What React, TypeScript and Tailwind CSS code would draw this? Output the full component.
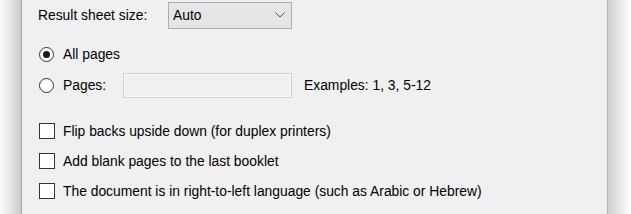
import React from "react";

function Radio({ checked }: { checked?: boolean }) {
  return (
    <span className="flex h-[15px] w-[15px] items-center justify-center rounded-full border border-[#333333] bg-white">
      {checked && <span className="h-[7px] w-[7px] rounded-full bg-[#1a1a1a]" />}
    </span>
  );
}

function Checkbox() {
  return <span className="block h-[16px] w-[16px] border border-[#333333] bg-white" />;
}

function CheckRow({ label, className }: { label: string; className: string }) {
  return (
    <div className={`flex h-[24px] items-center ${className}`}>
      <div className="w-[25px] pl-[1px]">
        <Checkbox />
      </div>
      <span>{label}</span>
    </div>
  );
}

export default function App() {
  return (
    <div
      className="flex h-[214px] w-[631px] overflow-hidden bg-white text-[13.85px] text-black"
      style={{ fontFamily: '"Liberation Sans", Arial, sans-serif' }}
    >
      {/* window shadow, left */}
      <div className="w-[22px] border-r border-[#a9a9a9] bg-gradient-to-r from-[#fafafa] via-[#e6e6e6] to-[#c9c9c9]" />

      {/* dialog body */}
      <div className="flex-1 bg-[#f0f0f0] pl-[16px]">
        <div className="mt-[2px] flex h-[27px] items-center">
          <span className="w-[130px]">Result sheet size:</span>
          <div className="flex h-[27px] w-[124px] items-center justify-between border border-[#adadad] bg-[#e5e5e5] pl-[4px] pr-[6px]">
            <span>Auto</span>
            <svg width="10" height="6" viewBox="0 0 10 6" className="mb-[1px]">
              <path d="M0.5 0.5 L5 5 L9.5 0.5" fill="none" stroke="#555" strokeWidth="1" />
            </svg>
          </div>
        </div>

        <div className="mt-[13px] flex h-[24px] items-center">
          <div className="w-[25px] pl-[1px]">
            <Radio checked />
          </div>
          <span>All pages</span>
        </div>

        <div className="mt-[7px] flex h-[25px] items-center">
          <div className="w-[25px] pl-[1px]">
            <Radio />
          </div>
          <span className="w-[60px]">Pages:</span>
          <div className="h-[25px] w-[169px] border border-[#cfcfcf] bg-[#f0f0f0] shadow-[inset_0_0_0_1px_#fafafa]" />
          <span className="ml-[12px]">Examples: 1, 3, 5-12</span>
        </div>

        <CheckRow className="mt-[21px]" label="Flip backs upside down (for duplex printers)" />
        <CheckRow className="mt-[6px]" label="Add blank pages to the last booklet" />
        <CheckRow
          className="mt-[6px]"
          label="The document is in right-to-left language (such as Arabic or Hebrew)"
        />
      </div>

      {/* window shadow, right */}
      <div className="w-[24px] border-l border-[#b4b4b4] bg-gradient-to-r from-[#cfcfcf] via-[#e8e8e8] to-[#ffffff]" />
    </div>
  );
}
